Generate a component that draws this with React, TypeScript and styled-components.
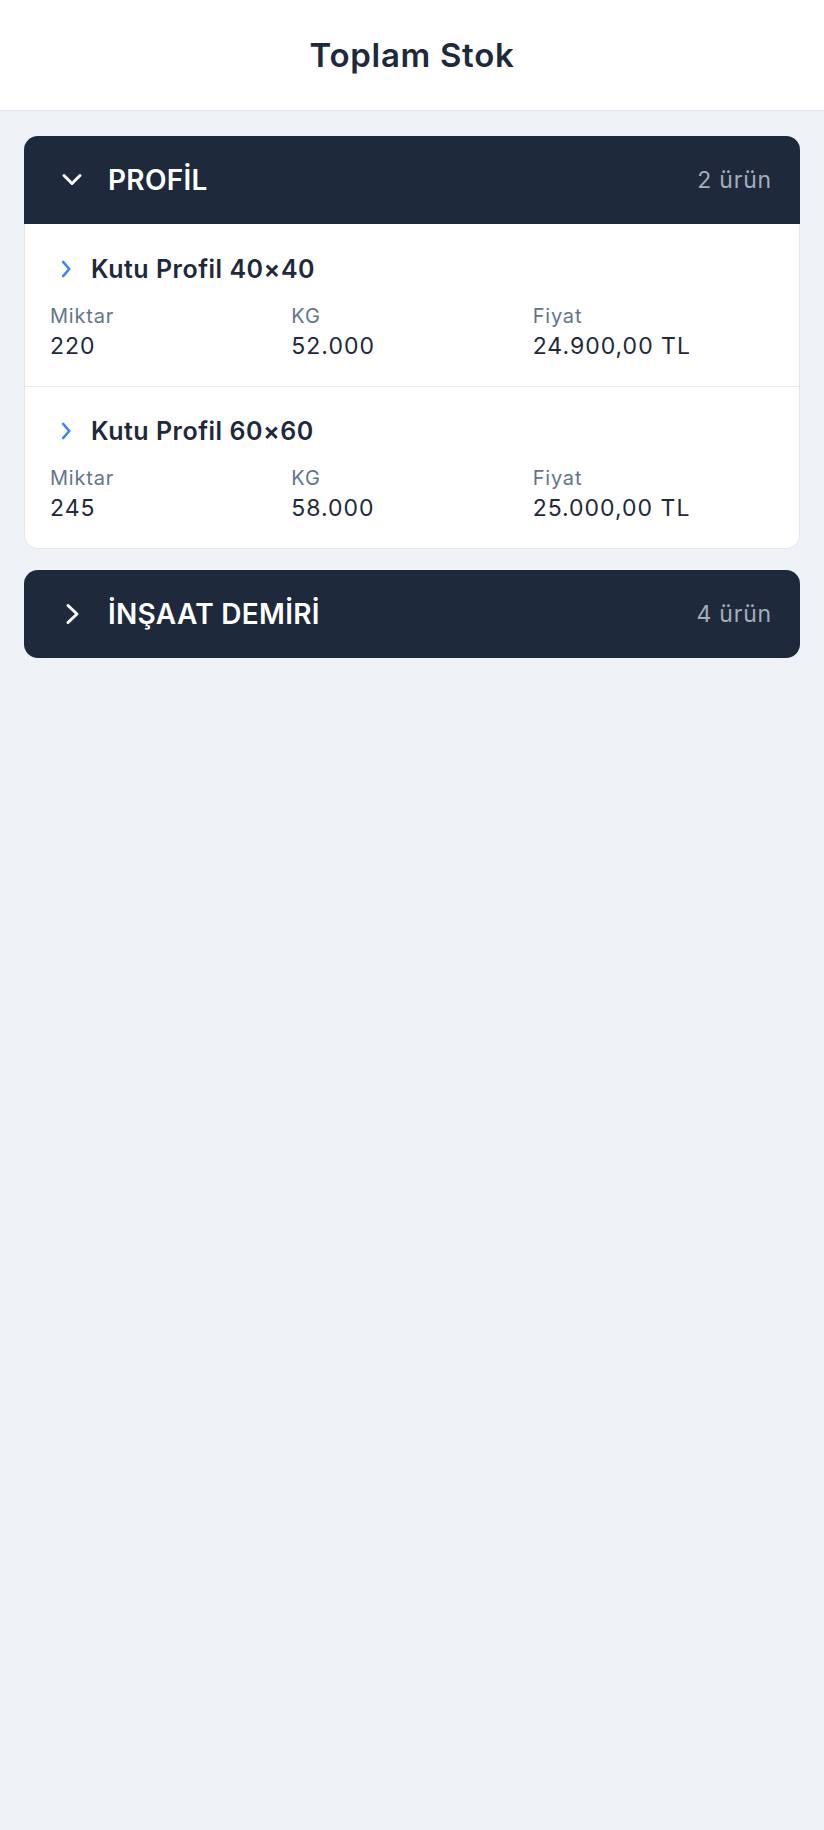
import styled, { createGlobalStyle } from 'styled-components'

const GlobalStyle = createGlobalStyle`
  html, body {
    margin: 0;
    padding: 0;
    background-color: #eff3f8;
    font-family: Inter, "Noto Sans", "Liberation Sans", sans-serif;
    color: #1e293b;
  }
  * {
    box-sizing: border-box;
  }
`

const Page = styled.div`
  min-height: 100vh;
  background-color: #eff3f8;
`

const TopBar = styled.header`
  height: 111px;
  background-color: #ffffff;
  border-bottom: 1px solid #e2e8f0;
  display: flex;
  align-items: center;
  justify-content: center;
`

const TopTitle = styled.h1`
  margin: 0;
  font-size: 33px;
  font-weight: 600;
  letter-spacing: 0.7px;
  color: #1e293b;
`

const Content = styled.main`
  padding: 25px 24px;
  display: flex;
  flex-direction: column;
  gap: 21px;
`

const Group = styled.section``

const GroupHeader = styled.div<{ $open?: boolean }>`
  height: 88px;
  background-color: #1e293b;
  border-radius: ${p => (p.$open ? '14px 14px 0 0' : '14px')};
  display: flex;
  align-items: center;
  padding: 0 28px 0 36px;
  gap: 24px;
  color: #ffffff;
`

const GroupName = styled.span`
  flex: 1;
  font-size: 28px;
  font-weight: 600;
  letter-spacing: 0.3px;
`

const GroupCount = styled.span`
  font-size: 23px;
  letter-spacing: 0.8px;
  color: #a3adbb;
`

const GroupBody = styled.div`
  background-color: #ffffff;
  border: 1px solid #e2e8f0;
  border-top: none;
  border-radius: 0 0 14px 14px;
`

const Item = styled.div`
  padding: 28px 25px 26px;

  &:first-child {
    padding-top: 29px;
  }

  & + & {
    border-top: 1px solid #e2e8f0;
  }
`

const ItemTitle = styled.div`
  display: flex;
  align-items: center;
  gap: 15px;
  padding-left: 6px;
  height: 32px;
  font-size: 25px;
  font-weight: 600;
  letter-spacing: 0.5px;
  color: #1e293b;
`

const Stats = styled.div`
  margin-top: 19px;
  display: grid;
  grid-template-columns: repeat(3, 1fr);
`

const Stat = styled.div`
  display: flex;
  flex-direction: column;
  gap: 4px;
`

const StatLabel = styled.span`
  font-size: 20px;
  line-height: 24px;
  letter-spacing: 0.8px;
  color: #64748b;
`

const StatValue = styled.span`
  font-size: 23px;
  line-height: 28px;
  letter-spacing: 1px;
  color: #1e293b;
`

const ChevronDown = () => (
  <svg width="24" height="24" viewBox="0 0 24 24" fill="none">
    <path d="M4 7.5 L12 15.5 L20 7.5" stroke="#ffffff" strokeWidth="3" strokeLinecap="round" strokeLinejoin="round" />
  </svg>
)

const ChevronRight = ({ color, size, wide }: { color: string; size: number; wide?: boolean }) => (
  <svg width={size} height={size} viewBox="0 0 24 24" fill="none">
    <path
      d={wide ? 'M8 3.5 L17 12 L8 20.5' : 'M8.5 3.5 L16 12 L8.5 20.5'}
      stroke={color}
      strokeWidth="3"
      strokeLinecap="round"
      strokeLinejoin="round"
    />
  </svg>
)

const items = [
  { name: 'Kutu Profil 40×40', miktar: '220', kg: '52.000', fiyat: '24.900,00 TL' },
  { name: 'Kutu Profil 60×60', miktar: '245', kg: '58.000', fiyat: '25.000,00 TL' },
]

export default function App() {
  return (
    <Page>
      <GlobalStyle />
      <TopBar>
        <TopTitle>Toplam Stok</TopTitle>
      </TopBar>

      <Content>
        <Group>
          <GroupHeader $open>
            <ChevronDown />
            <GroupName>PROFİL</GroupName>
            <GroupCount>2 ürün</GroupCount>
          </GroupHeader>
          <GroupBody>
            {items.map(item => (
              <Item key={item.name}>
                <ItemTitle>
                  <ChevronRight color="#3b82f6" size={20} />
                  {item.name}
                </ItemTitle>
                <Stats>
                  <Stat>
                    <StatLabel>Miktar</StatLabel>
                    <StatValue>{item.miktar}</StatValue>
                  </Stat>
                  <Stat>
                    <StatLabel>KG</StatLabel>
                    <StatValue>{item.kg}</StatValue>
                  </Stat>
                  <Stat>
                    <StatLabel>Fiyat</StatLabel>
                    <StatValue>{item.fiyat}</StatValue>
                  </Stat>
                </Stats>
              </Item>
            ))}
          </GroupBody>
        </Group>

        <Group>
          <GroupHeader>
            <ChevronRight color="#ffffff" size={24} wide />
            <GroupName>İNŞAAT DEMİRİ</GroupName>
            <GroupCount>4 ürün</GroupCount>
          </GroupHeader>
        </Group>
      </Content>
    </Page>
  )
}
